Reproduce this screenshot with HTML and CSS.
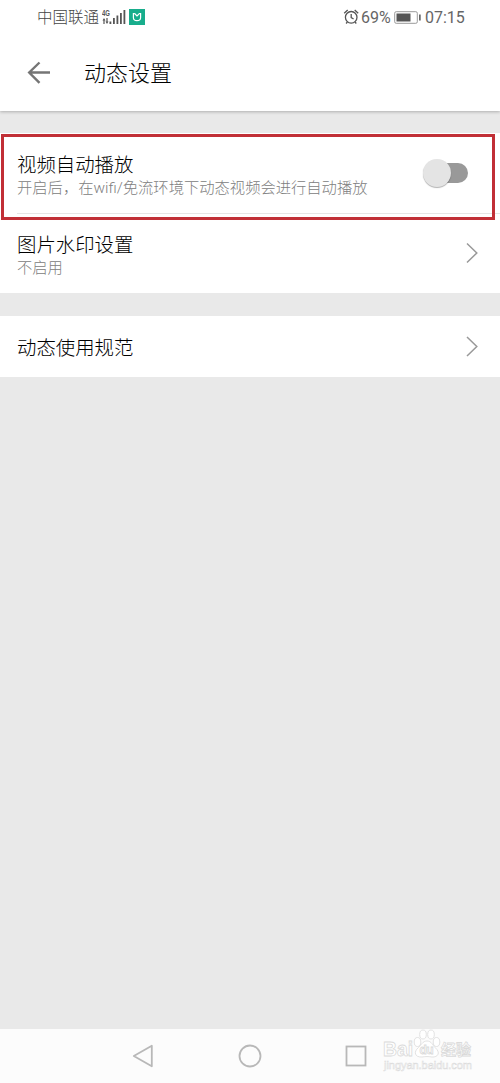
FILE: index.html
```html
<!DOCTYPE html>
<html lang="zh-CN">
<head>
<meta charset="utf-8">
<title>动态设置</title>
<link rel="stylesheet" href="styles.css">
</head>
<body>
<div class="screen">
  <header class="header">
    <div class="status">
      <span class="carrier">中国联通</span>
      <svg class="signal" width="26" height="18" viewBox="0 0 26 18">
        <text class="net" x="0" y="8" textLength="8" lengthAdjust="spacingAndGlyphs">4G</text>
        <g fill="#555"><path d="M2 10l1.500 2.500H2.600V16H1.400v-3.500H.5zM5 16l-1.500-2.500h.9V10h1.200v3.500h.9z"/><rect x="7.500" y="13.500" width="1.800" height="2.500"/><rect x="11" y="10" width="1.800" height="6"/><rect x="14.500" y="7.500" width="1.800" height="8.500"/><rect x="18" y="5" width="1.800" height="11"/><rect x="21.500" y="2" width="1.800" height="14"/></g>
      </svg>
      <svg class="app" width="16" height="16" viewBox="0 0 16 16">
        <rect width="16" height="16" fill="#18ad8c"/>
        <path d="M5.600 4.500H4.400v4c0 2 1.100 3.200 3.600 3.200s3.600-1.200 3.600-3.200v-4h-1.200L8 7 5.600 4.500" fill="none" stroke="#fff" stroke-width="1.200"/>
      </svg>
      <span class="spacer"></span>
      <svg class="alarm" width="16" height="16" viewBox="0 0 16 16" fill="none" stroke="#555" stroke-width="1.300">
        <circle cx="8.200" cy="8.300" r="5.800"/><path d="M8.200 5v3.600l2.400 1.400M1.200 4.300L4.700 1M11.700 1l3.500 3.300M4.400 13l-1.300 1.500M12 13l1.300 1.500"/>
      </svg>
      <span class="percent">69%</span>
      <svg class="battery" width="28" height="13" viewBox="0 0 28 13">
        <rect x=".7" y=".7" width="22.600" height="11.600" rx="1.500" fill="none" stroke="#999"/><rect x="2.500" y="2.500" width="14" height="8" fill="#555"/><rect x="25" y="3.500" width="1.700" height="6" fill="#666"/>
      </svg>
      <span class="clock">07:15</span>
    </div>
    <div class="titlebar">
      <svg width="24" height="24" viewBox="0 0 24 24" fill="none" stroke="#757575" stroke-width="2.400"><path d="M23 11.500H2.500M12.500 1.500L2.200 11.500l10.300 10.300"/></svg>
      <h1 class="title">动态设置</h1>
    </div>
  </header>
  <main class="content">
    <section class="group">
      <div class="row row-video">
        <div class="text"><div class="label">视频自动播放</div><div class="hint">开启后，在wifi/免流环境下动态视频会进行自动播放</div></div>
        <div class="switch"><div class="knob"></div></div>
      </div>
      <div class="row row-mark">
        <div class="text"><div class="label">图片水印设置</div><div class="hint">不启用</div></div>
        <svg class="chevron" width="12" height="22" viewBox="0 0 12 22"><path d="M1 1.500l9.800 9.500L1 20.500"/></svg>
      </div>
      <div class="highlight"></div>
    </section>
    <section class="group">
      <div class="row row-rule">
        <div class="text"><div class="label">动态使用规范</div></div>
        <svg class="chevron" width="12" height="22" viewBox="0 0 12 22"><path d="M1 1l9.800 9.500L1 20"/></svg>
      </div>
    </section>
  </main>
  <nav class="nav">
    <svg width="22" height="24" viewBox="0 0 22 24"><path d="M19.800 1.700v20.600L1.800 12z" stroke-linejoin="round"/></svg>
    <svg width="24" height="24" viewBox="0 0 24 24"><circle cx="12" cy="12" r="10.500"/></svg>
    <svg width="22" height="22" viewBox="0 0 22 22"><rect x="1.500" y="1.500" width="19" height="19"/></svg>
    <svg class="watermark" width="96" height="48" viewBox="0 0 96 48">
      <text class="wm-brand" x="2" y="27" textLength="30" lengthAdjust="spacingAndGlyphs">Bai</text>
      <g class="paw"><ellipse cx="36.500" cy="13" rx="3.300" ry="4.500"/><ellipse cx="42" cy="5.500" rx="3.300" ry="4.500"/><ellipse cx="50" cy="5.500" rx="3.300" ry="4.500"/><ellipse cx="55.500" cy="13" rx="3.300" ry="4.500"/><path d="M46 12c4.500 0 5.500 4 8 6.500 6 5 3 10-3 9.500-4-.6-6-.6-10 0-7 .5-9-5-3.500-9.500 3-2.500 4-6.500 8.500-6.500z"/></g>
      <text class="wm-du" x="38.500" y="25" textLength="14">du</text>
      <text class="wm-cn" x="60" y="26" textLength="30">经验</text>
      <text class="wm-url" x="3" y="40" textLength="88">jingyan.baidu.com</text>
    </svg>
  </nav>
</div>
</body>
</html>
```
FILE: styles.css
```css
* { box-sizing: border-box; }
body { margin: 0; background: #e9e9e9; font-family: Roboto, "Noto Sans CJK SC", sans-serif; font-weight: 300; }
.screen { width: 500px; height: 1083px; display: flex; flex-direction: column; overflow: hidden; }
.header { height: 111px; background: #fff; box-shadow: 0 1px 3px rgba(0,0,0,.25); }
.status { height: 34px; padding: 0 35px 0 37px; display: flex; align-items: center; color: #444; white-space: nowrap; }
.carrier { font-size: 15.500px; line-height: 32px; padding-top: 2px; }
.signal { margin-left: 3px; }
.app { margin-left: 1px; }
.net { font: bold 8.500px "Liberation Sans", sans-serif; fill: #555; }
.spacer { flex: 1; }
.percent { font-size: 16px; margin-left: 2px; width: 31px; font-weight: 400; color: #666; }
.battery { margin-left: 2px; }
.clock { font-size: 16px; width: 40px; margin-left: 3px; font-weight: 400; color: #666; }
.titlebar { height: 77px; padding-left: 27px; display: flex; align-items: center; gap: 33px; }
.title { margin: 0; padding-top: 2px; font-size: 22px; line-height: 32px; font-weight: 300; color: #000; }
.content { flex: 1; padding-top: 22px; }
.group { position: relative; background: #fff; margin-bottom: 23px; }
.row { display: flex; align-items: center; justify-content: space-between; padding: 0 22px 0 17px; }
.row-video { height: 80px; padding-right: 32px; }
.row-mark { height: 80px; }
.row-mark::before { content: ""; position: absolute; top: 80px; left: 17px; right: 0; height: 1px; background: #e6e6e6; }
.row-rule { height: 61px; }
.text { padding-top: 4px; }
.label { font-size: 19.400px; line-height: 26px; color: #000; }
.hint { font-size: 15.300px; line-height: 21px; color: #808080; white-space: nowrap; }
.row-video .label, .row-mark .label { padding-top: 1px; line-height: 25px; }
.chevron { fill: none; stroke: #999; stroke-width: 1.500; }
.switch { position: relative; width: 37px; height: 20px; border-radius: 10px; background: #999; }
.knob { position: absolute; left: -8px; top: -4px; width: 28px; height: 28px; border-radius: 50%; background: #e4e4e4; box-shadow: 0 1px 1px rgba(0,0,0,.3); }
.highlight { position: absolute; left: 1px; top: 1px; width: 494px; height: 86px; border: 3px solid #c12f36; }
.nav { position: relative; height: 54px; background: #fcfcfc; display: flex; align-items: center; gap: 83px; padding-left: 132px; fill: none; stroke: #b8b8b8; stroke-width: 1.800; }
.nav svg { flex: none; }
.nav svg:first-child { margin-right: 1px; }
.nav .watermark { position: absolute; left: 381px; top: 0; stroke: #dadada; stroke-width: .8; fill: #fff; }
.wm-brand { font: bold 20px "Liberation Sans", sans-serif; }
.wm-du { font: bold 12px "Liberation Sans", sans-serif; }
.wm-cn { font: bold 15px "Noto Sans CJK SC", sans-serif; }
.wm-url { font: 11px "Liberation Sans", sans-serif; stroke-width: .5; }
```
